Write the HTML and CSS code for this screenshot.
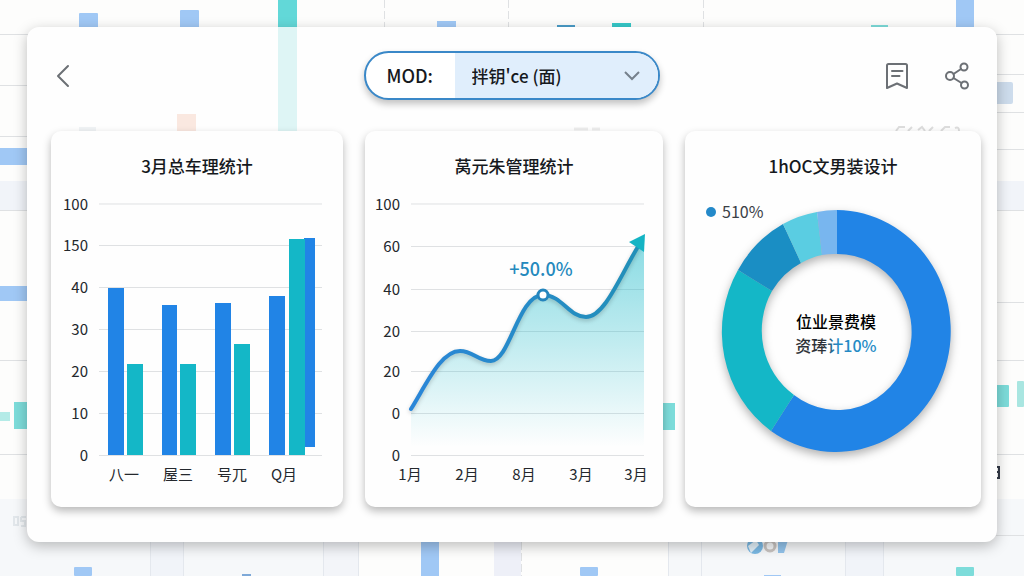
FILE: index.html
```html
<!DOCTYPE html>
<html lang="zh-CN">
<head>
<meta charset="utf-8">
<meta name="viewport" content="width=device-width, initial-scale=1">
<title>统计</title>
<link rel="stylesheet" href="styles.css">
</head>
<body>
<svg class="backdrop" viewBox="0 0 1024 576" preserveAspectRatio="xMidYMid slice" aria-hidden="true">
  <rect width="1024" height="576" fill="#fdfdfc"/>
  <g fill="#f1f4f9">
    <rect y="181" width="1024" height="29"/>
    <rect y="499" width="1024" height="77" fill="#f6f8fa"/>
    <rect x="358" y="542" width="310" height="34" fill="#fdfdfc"/>
    <rect x="150" y="542" width="33" height="34"/>
    <rect x="323" y="542" width="35" height="34" fill="#f3f5f9"/>
    <rect x="494" y="542" width="27" height="34" fill="#eef0f8"/>
    <rect x="845" y="542" width="38" height="34"/>
  </g>
  <g stroke="#dfe1e3" fill="none">
    <path d="M0 34.500H1024M0 85.500H28M0 136.500H28M0 210.500H1024M0 360.500H1024M0 454.500H1024M996 74.500H1024M996 112.500H1024M996 149.500H1024M996 302.500H1024M996 535.500H1024"/>
    <path d="M150.500 542V576M183.500 542V576M323.500 542V576M358.500 542V576M668.500 542V576M701.500 542V576M845.500 542V576M883.500 542V576" stroke="#e4e8ee"/>
    <path d="M384.500 0V28M508.500 0V28M703.500 0V28M521.500 542V576" stroke-dasharray="8 3"/>
  </g>
  <g fill="#a0c8f5">
    <rect x="79" y="13" width="19" height="20" rx="1"/>
    <rect x="180" y="10" width="19" height="20" rx="1"/>
    <rect x="437" y="21" width="19" height="10"/>
    <rect x="557" y="25" width="18" height="4" fill="#4a9cc8"/>
    <rect x="956" y="0" width="18" height="30"/>
    <rect y="148" width="30" height="17"/>
    <rect y="286" width="30" height="15"/>
    <rect x="421" y="540" width="18" height="36"/>
    <rect x="74" y="567" width="18" height="9" rx="1"/>
    <rect x="580" y="567" width="18" height="9" rx="1"/>
    <rect x="242" y="574" width="9" height="2" fill="#7ea9d8"/>
    <rect x="764" y="575" width="17" height="1"/>
    <rect x="990" y="82" width="23" height="22" rx="2" fill="#cddcec"/>
  </g>
  <g fill="#7ddcda">
    <rect x="278" y="0" width="19" height="30" fill="#62d8d8"/>
    <rect x="612" y="23" width="19" height="6" fill="#36c8c8"/>
    <rect x="871" y="25" width="17" height="4"/>
    <rect x="14" y="402" width="16" height="27"/>
    <rect y="412" width="10" height="9" fill="#b4ebe7"/>
    <rect x="655" y="403" width="20" height="27"/>
    <rect x="990" y="385" width="19" height="22" rx="1"/>
    <rect x="1017" y="381" width="7" height="26" rx="1" fill="#a9e6e1"/>
    <rect x="956" y="567" width="18" height="9" rx="1"/>
  </g>
  <path d="M14 517h4v8h-4zM21 517h5M21 517v4h4v5h-4" fill="none" stroke="#e2e7eb" stroke-width="2"/>
  <circle cx="755" cy="546" r="8" fill="#7bb9e4"/>
  <path d="M748 546l8-6 3 5-8 8z" fill="#e3f1fa"/>
  <circle cx="770" cy="546" r="5" fill="none" stroke="#c9c4c1" stroke-width="3"/>
  <path d="M778 540h10l-4 13h-6z" fill="#93c4ec"/>
  <path d="M996 467h4M996 472h3M999 467v12M996 478h4" fill="none" stroke="#343b49" stroke-width="2"/>
</svg>

<main class="panel">
  <svg class="panel-tint" viewBox="0 0 970 403" preserveAspectRatio="none" aria-hidden="true">
    <rect x="251" width="19" height="105" fill="#def5f5"/>
    <rect x="150" y="87" width="19" height="18" fill="#fae8e0"/>
    <rect x="52" y="100" width="17" height="5" fill="#f0f3f5"/>
    <rect x="635" y="376" width="13" height="27" fill="#7ddcda"/>
    <path d="M547 102h14M565 102h8" stroke="#ededed" stroke-width="3"/>
    <path d="M869 104l3-4h6M881 104l4-4M891 103l4-3 3 4M902 104l4-4M914 104l4-4h5M928 101q4-2 4 3" fill="none" stroke="#ddd" stroke-width="2"/>
  </svg>
  <header class="toolbar">
    <button class="icon-button" type="button" aria-label="返回">
      <svg width="28" height="28" viewBox="0 0 28 28"><path d="M17 4L7 14 17 24"/></svg>
    </button>
    <div class="picker">
      <label class="picker-label" for="mode">MOD:</label>
      <div class="picker-field">
        <select id="mode"><option>拌钥'ce (面)</option></select>
        <svg class="picker-arrow" width="16" height="10" viewBox="0 0 16 10" aria-hidden="true"><path d="M1 1l7 7 7-7"/></svg>
      </div>
    </div>
    <div class="actions">
      <button class="icon-button" type="button" aria-label="收藏">
        <svg width="28" height="28" viewBox="0 0 28 28"><path d="M4 3.500Q4 2 5.500 2H22.500Q24 2 24 3.500V26L14 21.500 4 26ZM9 9H19.500M9 14H16.500"/></svg>
      </button>
      <button class="icon-button" type="button" aria-label="分享">
        <svg width="28" height="28" viewBox="0 0 28 28"><circle cx="6" cy="14" r="4"/><circle cx="20" cy="5" r="3.500"/><circle cx="20.500" cy="23" r="3.500"/><path d="M9.500 12l7.500-5M9.500 16l8 5"/></svg>
      </button>
    </div>
  </header>

  <div class="cards">
    <section class="card">
      <h2>3月总车理统计</h2>
      <svg class="chart" viewBox="0 0 292 300" role="img" aria-label="3月总车理统计">
        <path class="grid" d="M48 14H271M48 55.500H271M48 97.500H271M48 139.500H271M48 181.500H271M48 223.500H271M48 265.500H271"/>
        <g class="axis y-axis">
          <text x="37" y="20">100</text><text x="37" y="61">150</text><text x="37" y="103">40</text><text x="37" y="145">30</text><text x="37" y="187">20</text><text x="37" y="229">10</text><text x="37" y="271">0</text>
        </g>
        <g class="bars-a">
          <rect x="57" y="98" width="16" height="167"/><rect x="111" y="115" width="15" height="150"/><rect x="164" y="113" width="16" height="152"/><rect x="218" y="106" width="16" height="159"/><rect x="253" y="48" width="11" height="209"/>
        </g>
        <g class="bars-b">
          <rect x="76" y="174" width="16" height="91"/><rect x="129" y="174" width="16" height="91"/><rect x="183" y="154" width="16" height="111"/><rect x="238" y="49" width="16" height="216"/>
        </g>
        <g class="axis x-axis">
          <text x="73" y="290">八一</text><text x="127" y="290">屋三</text><text x="181" y="290">号兀</text><text x="233" y="290">Q月</text>
        </g>
      </svg>
    </section>

    <section class="card">
      <h2>莴元朱管理统计</h2>
      <svg class="chart" viewBox="0 0 298 300" role="img" aria-label="莴元朱管理统计">
        <defs>
          <linearGradient id="area" x1="0" y1="0" x2="0" y2="1"><stop offset="0" stop-color="#14b8c8" stop-opacity=".5"/><stop offset=".5" stop-color="#14b8c8" stop-opacity=".26"/><stop offset="1" stop-color="#14b8c8" stop-opacity="0"/></linearGradient>
          <linearGradient id="stroke" x1="0" y1="0" x2="1" y2="0"><stop offset="0" stop-color="#2a86d8"/><stop offset="1" stop-color="#2290b8"/></linearGradient>
        </defs>
        <path class="grid" d="M46 14H279M46 56.500H279M46 99.500H279M46 141.500H279M46 181.500H279M46 223.500H279M46 265.500H279"/>
        <path d="M46 219C62 193 76 161 95 161C108 161 113 171 126 171C145 171 153 105 178 105C197 105 204 127 221 127C240 127 256 84 274 55L279 50V257H46Z" fill="url(#area)"/>
        <g class="axis y-axis">
          <text x="35" y="20">100</text><text x="35" y="62">60</text><text x="35" y="105">40</text><text x="35" y="147">20</text><text x="35" y="187">20</text><text x="35" y="229">0</text><text x="35" y="271">0</text>
        </g>
        <path class="trend" d="M46 219C62 193 76 161 95 161C108 161 113 171 126 171C145 171 153 105 178 105C197 105 204 127 221 127C240 127 256 84 274 55"/>
        <path d="M280 44L264 52 279 62Z" fill="#14b4c4"/>
        <circle class="marker" cx="178" cy="105" r="5"/>
        <text class="callout" x="176" y="86">+50.0%</text>
        <g class="axis x-axis">
          <text x="45" y="290">1月</text><text x="102" y="290">2月</text><text x="159" y="290">8月</text><text x="216" y="290">3月</text><text x="271" y="290">3月</text>
        </g>
      </svg>
    </section>

    <section class="card">
      <h2>1hOC文男装设计</h2>
      <svg class="chart" viewBox="0 0 296 300" role="img" aria-label="1hOC文男装设计">
        <defs><linearGradient id="ink" x1="0" y1="0" x2="1" y2="0"><stop offset=".35" stop-color="#2c3138"/><stop offset=".5" stop-color="#2489c4"/></linearGradient></defs>
        <g class="donut">
          <path d="M152 20A115 121 0 1 1 86 241L109 205A74 78 0 1 0 152 64Z" fill="#2184e6"/>
          <path d="M86 241A115 121 0 0 1 53 80L87 101A74 78 0 0 0 109 205Z" fill="#14b7c7"/>
          <path d="M53 80A115 121 0 0 1 98 34L116 73A74 78 0 0 0 87 101Z" fill="#1a8ec4"/>
          <path d="M98 34A115 121 0 0 1 132 22L137 65A74 78 0 0 0 116 73Z" fill="#5acde2"/>
          <path d="M132 22A115 121 0 0 1 152 20V64A74 78 0 0 0 137 65Z" fill="#78b6ef"/>
        </g>
        <circle cx="26" cy="22" r="5" fill="#2489c9"/>
        <text class="legend" x="37" y="28">510%</text>
        <text class="total" x="151" y="138">位业景费模</text>
        <text class="total" x="151" y="162" fill="url(#ink)">资琫计10%</text>
      </svg>
    </section>
  </div>
</main>
</body>
</html>
```

FILE: styles.css
```css
* { box-sizing: border-box; }

body {
  margin: 0;
  min-height: 100vh;
  padding: 27px 27px 34px;
  font-family: "Noto Sans CJK SC", "Noto Sans", sans-serif;
  color: #16191d;
  background: #fdfdfc;
}

.backdrop {
  position: absolute;
  inset: 0;
  width: 100%;
  height: 100%;
}

.panel {
  position: relative;
  padding: 24px 16px 35px 24px;
  border-radius: 12px;
  background: #fefefe;
  box-shadow: 0 4px 14px rgba(0, 0, 0, .26);
}

.panel-tint {
  position: absolute;
  top: 0;
  left: 0;
  width: 100%;
  height: 403px;
}

.toolbar {
  position: relative;
  display: grid;
  grid-template-columns: 1fr 296px 1fr;
  align-items: center;
  margin-bottom: 31px;
  padding-right: 9px;
}

.icon-button {
  display: block;
  width: 28px;
  height: 28px;
  padding: 0;
  border: 0;
  background: none;
}

.icon-button svg {
  display: block;
  fill: none;
  stroke: #6c7075;
  stroke-width: 2;
  stroke-linecap: round;
  stroke-linejoin: round;
}

.picker {
  display: flex;
  height: 49px;
  overflow: hidden;
  border: 2px solid #3a88c8;
  border-radius: 25px;
  background: #fff;
  box-shadow: 0 4px 7px rgba(0, 0, 0, .24);
}

.picker-label {
  width: 89px;
  padding-left: 21px;
  font-size: 18px;
  font-weight: 500;
  line-height: 44px;
}

.picker-field {
  position: relative;
  flex: 1;
  background: #e0eefc;
}

.picker select {
  width: 100%;
  height: 100%;
  padding: 0 44px 0 17px;
  border: 0;
  appearance: none;
  background: transparent;
  color: inherit;
  font: 500 17px/24px "Noto Sans CJK SC", sans-serif;
}

.picker-arrow {
  position: absolute;
  top: 18px;
  right: 18px;
  fill: none;
  stroke: #76818c;
  stroke-width: 2;
  pointer-events: none;
}

.actions {
  display: flex;
  justify-content: flex-end;
  gap: 33px;
}

.cards {
  position: relative;
  display: grid;
  grid-template-columns: 292fr 298fr 296fr;
  gap: 22px;
}

.card {
  padding: 22px 0 17px;
  border-radius: 10px;
  background: #fefefe;
  box-shadow: 0 4px 9px rgba(0, 0, 0, .28);
}

h2 {
  margin: 0 0 11px;
  font-size: 17px;
  font-weight: 500;
  line-height: 26px;
  text-align: center;
}

.chart {
  display: block;
  width: 100%;
  height: auto;
}

.grid { fill: none; stroke: #dfe1e3; }
.axis { font-size: 15px; fill: #24282d; }
.y-axis { text-anchor: end; }
.x-axis { text-anchor: middle; }
.bars-a { fill: #2184e6; }
.bars-b { fill: #14b7c7; }

.trend {
  fill: none;
  stroke: url(#stroke);
  stroke-width: 4;
  stroke-linecap: round;
  filter: drop-shadow(0 2px 2px rgba(0, 0, 0, .2));
}

.marker { fill: #fff; stroke: #2485bd; stroke-width: 3; }
.callout { font-size: 18px; font-weight: 500; fill: #2489bd; text-anchor: middle; }
.donut { filter: drop-shadow(0 4px 5px rgba(0, 0, 0, .3)); }
.legend { font-size: 16px; fill: #3b4046; }
.total { font-size: 16px; font-weight: 500; text-anchor: middle; }
```
